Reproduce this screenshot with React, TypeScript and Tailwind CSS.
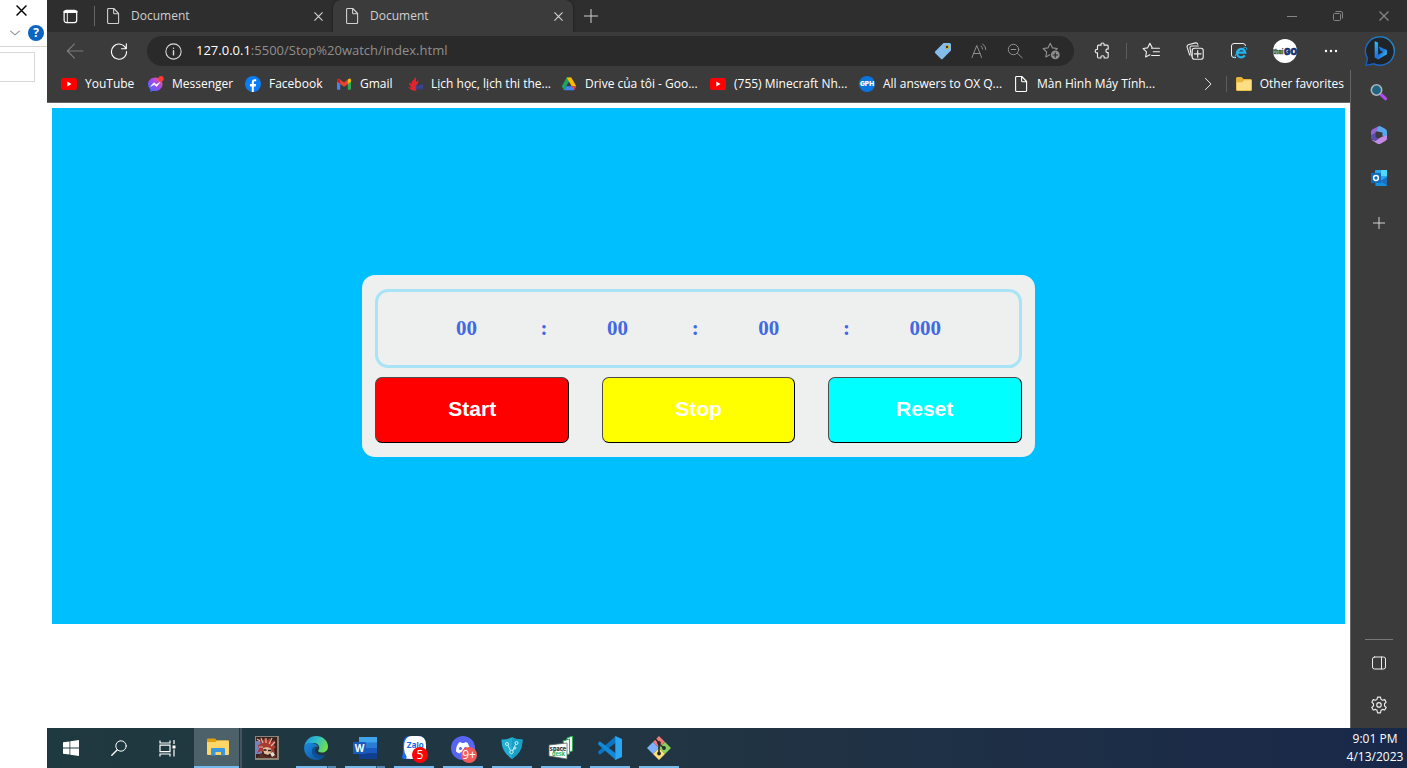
import { useEffect, useState } from "react";
import type { ReactNode } from "react";

const ui = "font-['Open_Sans','Noto_Sans',sans-serif]";

/* ---------- line icons ---------- */

function Line({ size = 16, className = "", width = 1, children }: { size?: number; className?: string; width?: number; children: ReactNode }) {
  return (
    <svg width={size} height={size} viewBox="0 0 16 16" fill="none" stroke="currentColor" strokeWidth={width} strokeLinecap="round" strokeLinejoin="round" className={`shrink-0 ${className}`} aria-hidden="true">
      {children}
    </svg>
  );
}

const PageIcon = () => (
  <Line width={1.1}>
    <path d="M2.6 1.5v13q0 1 1 1h9q1 0 1-1V5.5L8.8.5H3.6q-1 0-1 1zM8.6.7v4q0 1 1 1h4" />
  </Line>
);
const CrossIcon = ({ size = 9 }: { size?: number }) => (
  <svg width={size} height={size} viewBox="0 0 10 10" stroke="currentColor" strokeWidth="1.3" aria-hidden="true">
    <path d="M.5.5l9 9M9.5.5l-9 9" />
  </svg>
);
const PlusIcon = ({ size = 14 }: { size?: number }) => (
  <svg width={size} height={size} viewBox="0 0 14 14" stroke="currentColor" aria-hidden="true">
    <path d="M7 0v14M0 7h14" />
  </svg>
);
const TabsIcon = () => (
  <Line size={15} className="text-white">
    <rect x="1.2" y="1.5" width="13.4" height="13" rx="2.4" strokeWidth="1.3" />
    <path d="M1.500 3h13" strokeWidth="2.400" />
    <path d="M4.600 4v10" />
  </Line>
);
const RefreshIcon = () => (
  <Line size={18} className="text-white">
    <path d="M14.2 6A6.7 6.7 0 1 0 14.7 8.6M14.5 1.6V6h-4.3" />
  </Line>
);
const StarPath = "M7.3 1.2l1.9 4 4.4.6-3.2 3.1.8 4.4-3.9-2.1-3.9 2.1.8-4.4L1 5.8l4.4-.6z";

/* ---------- colour icons ---------- */

const YouTube = () => (
  <svg width="16" height="12" viewBox="0 0 16 12" aria-hidden="true">
    <rect width="16" height="12" rx="2.6" fill="#f00" />
    <path d="M6.3 3.6v4.8L10.5 6z" fill="#fff" />
  </svg>
);
const Messenger = () => (
  <svg width="16" height="16" viewBox="0 0 16 16" aria-hidden="true">
    <defs>
      <linearGradient id="msg" x1="0" y1="1" x2="1" y2="0">
        <stop offset="0" stopColor="#2d7bff" />
        <stop offset=".5" stopColor="#9b45f5" />
        <stop offset="1" stopColor="#ff5f6d" />
      </linearGradient>
    </defs>
    <path d="M7.2 1.4C3.2 1.4 0 4.3 0 8.2c0 2.1 1 3.8 2.4 5V16l2.4-1.3c.8.2 1.6.3 2.4.3 4 0 7.3-2.9 7.3-6.8s-3.3-6.8-7.3-6.8z" fill="url(#msg)" />
    <path d="M2.8 10.3l3.1-3.6 2.4 1.9 3.4-2-3 3.9-2.5-1.9z" fill="#fff" stroke="#fff" strokeWidth=".6" />
    <circle cx="13" cy="2.7" r="2.7" fill="#ff3b30" />
  </svg>
);
const Facebook = () => (
  <svg width="16" height="16" viewBox="0 0 16 16" aria-hidden="true">
    <circle cx="8" cy="8" r="8" fill="#0a7cf4" />
    <path d="M6.8 16v-5.5H4.9V8h1.9V6.4c0-2.1 1.1-3.2 3-3.2.7 0 1.4.1 1.4.1v2H10c-1 0-1.200.6-1.200 1.200V8h2.300l-.4 2.500H8.800V16z" fill="#fff" />
  </svg>
);
const Gmail = () => (
  <svg width="16" height="16" viewBox="0 0 16 16" aria-hidden="true">
    <path d="M1 4v9q0 .8.8.8h2.400V6.500z" fill="#4285f4" />
    <path d="M15 4v9q0 .8-.8.8h-2.400V6.500z" fill="#34a853" />
    <path d="M1 4.300q0-2 2-1.600l5 3.900 5-3.900-1.200 5.500L8 10.800 4.200 8 1 5.600z" fill="#ea4335" />
    <path d="M11.800 3.600Q15 1 15 4.200v1.400L11.800 8z" fill="#fbbc04" />
    <path d="M1 4.200Q1 3 2 2.600l2.200 1.700V8L1 5.600z" fill="#c5221f" />
  </svg>
);
const Flame = () => (
  <svg width="16" height="16" viewBox="0 0 16 16" aria-hidden="true">
    <path d="M8 1c2 2 .3 3.600 1.500 5 .8-.7 1-1.500 1.800-2 .3 2.200-.2 3.600-1.800 5.400-.6 2-1 3.600 0 5.100-3 .7-6-.3-8.500-3.400 1.500.5 2.600.5 3.300-.2C2.800 9.800 2.200 8.600 2 6.800c1.300.4 2 .8 2.500 1.700C4.500 6 5 5 6.400 4 7.300 3.200 8 2.200 8 1z" fill="#e4232c" />
    <path d="M9.500 9v4.500M12 9v4.500M9.500 11.200H12M13.300 13.500V9l1 2 1.200-2v4.500" stroke="#3c4390" strokeWidth="1.200" fill="none" />
  </svg>
);
const Drive = () => (
  <svg width="16" height="16" viewBox="0 0 16 16" aria-hidden="true">
    <path d="M5.700 1.500h4.600L8 5.600 3 14.200.8 10.200z" fill="#1ea362" />
    <path d="M5.700 1.500h4.600l5 8.700h-4.600z" fill="#ffba00" />
    <path d="M5.400 10.200h9.800L13 14.200H3z" fill="#4285f4" />
    <path d="M10.700 10.200h4.600L13 14.200z" fill="#ea4335" />
  </svg>
);
const Gph = () => (
  <svg width="16" height="16" viewBox="0 0 16 16" aria-hidden="true">
    <circle cx="8" cy="8" r="8" fill="#0a75dc" />
    <text x="8" y="10.400" textAnchor="middle" fill="#fff" fontFamily="Inter, sans-serif" fontWeight="900" fontSize="6.500">GPH</text>
  </svg>
);
const Folder = () => (
  <svg width="16" height="14" viewBox="0 0 16 14" aria-hidden="true">
    <path d="M0 1.500Q0 0 1.500 0h4l2 2h7q1.500 0 1.500 1.500v9q0 1.500-1.500 1.500h-13Q0 14 0 12.500z" fill="#e8b53c" />
    <path d="M.8 5.200h5.400l2-2h6.900v9.300q0 .7-.7.700H1.500q-.7 0-.7-.7z" fill="#ffdf84" />
  </svg>
);
const Tag = () => (
  <svg width="18" height="18" viewBox="0 0 18 18" aria-hidden="true">
    <path d="M9.500 1h6Q17 1 17 2.500v6L8.800 16.700q-1 1-2 0L1.300 11.200q-1-1 0-2z" fill="#83bdec" />
    <circle cx="13" cy="5" r="1.700" fill="#4a3b18" stroke="#d5a72b" />
  </svg>
);
const InternetExplorer = () => (
  <svg width="18" height="18" viewBox="0 0 18 18" fill="none" aria-hidden="true">
    <path d="M6 15.500H4Q1.500 15.500 1.500 13V4Q1.500 1.500 4 1.500h9Q15.500 1.500 15.500 4" stroke="#eee" />
    <path d="M14.700 13.300A4.200 4.200 0 1 1 15.300 10.700H7.500" stroke="#22b4ef" strokeWidth="2.200" />
    <path d="M5 16.500c-1.400-2 4-9.800 10.300-11 1.400-.2 1.800.8 1.200 2.200" stroke="#22b4ef" strokeWidth="1" />
  </svg>
);
const Bing = () => (
  <svg width="32" height="32" viewBox="0 0 32 32" fill="none" aria-hidden="true">
    <defs>
      <linearGradient id="bingRing" x1="1" y1="0" x2="0" y2="1">
        <stop offset="0" stopColor="#2196d8" />
        <stop offset="1" stopColor="#1459c4" />
      </linearGradient>
      <linearGradient id="bingB" x1="0" y1="0" x2="1" y2="1">
        <stop offset="0" stopColor="#2ec5f4" />
        <stop offset=".55" stopColor="#1b6fe0" />
        <stop offset="1" stopColor="#48d5ee" />
      </linearGradient>
    </defs>
    <path d="M16 1.800a14.200 14.200 0 1 1-6 27L2 30.500l1.500-7.200A14.200 14.200 0 0 1 16 1.800z" fill="#202428" stroke="url(#bingRing)" strokeWidth="1.300" />
    <path d="M10.700 6.200l3.400 1.300v12.300l5-2.800-2.600-1.300-1.600-4.200 8 3.400v4.300l-8.800 5.300-3.400-2.100z" fill="url(#bingB)" />
  </svg>
);
const SearchColor = () => (
  <svg width="18" height="18" viewBox="0 0 18 18" fill="none" aria-hidden="true">
    <path d="M11.500 12l4 3.700" stroke="#b04af0" strokeWidth="3.200" strokeLinecap="round" />
    <circle cx="6.500" cy="7" r="5.200" fill="#20627f" stroke="#a9b4b9" strokeWidth="1.600" />
  </svg>
);
const Office = () => (
  <svg width="18" height="18" viewBox="0 0 18 18" aria-hidden="true">
    <path d="M8.500.2L3 3Q1 4 1 6v6.500l4 1.500V8q0-1.600 1.500-2.400l5-2.600z" fill="#9665d3" />
    <path d="M8.500.2q1.200-.4 2.400.2L15.500 3Q17 4 17 5.700V12.500l-4.600-3V6.500L6.500 5.300z" fill="#58a7ed" />
    <path d="M17 9.500v3q0 1.500-1.300 2.300L10.500 17.700q-1.500.6-3 0L1.200 13.800 5 14.500l7.400-4z" fill="#c48ae6" />
    <path d="M1 9v4l4.500 2 3-2L5.600 11V7z" fill="#5b4cb0" />
  </svg>
);
const Outlook = () => (
  <svg width="18" height="18" viewBox="0 0 18 18" aria-hidden="true">
    <rect x="5" y="1" width="12" height="13" rx="1" fill="#28a8ea" />
    <path d="M11 1h6v6h-6z" fill="#50d9ff" />
    <path d="M5 9l6 3 6-4v8.500q0 .5-.8.500H5.500z" fill="#1490df" />
    <path d="M17 8v8.500L10 12z" fill="#1a6fc0" />
    <rect x="1" y="4" width="10" height="10" rx="1" fill="#0f6cbd" />
    <circle cx="6" cy="9" r="2.400" fill="none" stroke="#fff" strokeWidth="1.500" />
  </svg>
);

/* ---------- taskbar icons ---------- */

const WindowsLogo = () => (
  <svg width="16" height="16" viewBox="0 0 16 16" fill="#fff" aria-hidden="true">
    <path d="M0 2.300l6.500-.9v6.100H0zM7.300 1.300L16 0v7.500H7.300zM0 8.400h6.500v6.200L0 13.700zM7.300 8.400H16V16l-8.700-1.300z" />
  </svg>
);
const TaskView = () => (
  <svg width="17" height="17" viewBox="0 0 17 17" fill="none" stroke="#fff" strokeWidth="1.200" aria-hidden="true">
    <path d="M1 .5v2.500h10V.5M1 16.500V14h10v2.500M1 5.200h10v6.500H1zM15 0v4M15 9.500V16.500" />
    <path d="M13.500 5.500h3v3h-3z" fill="#fff" stroke="none" />
  </svg>
);
const Explorer = () => (
  <svg width="22" height="18" viewBox="0 0 22 18" aria-hidden="true">
    <path d="M0 1.500Q0 .5 1 .5h7l2 2h11q1 0 1 1V7H0z" fill="#e2a00f" />
    <path d="M0 4h8.500l1.500-1.500H21q1 0 1 1V16q0 1-1 1H1q-1 0-1-1z" fill="#ffd667" />
    <path d="M4 17.500V11q0-1 1-1h12q1 0 1 1v6.500h-4V14H8.500v3.500z" fill="#3b96dd" />
  </svg>
);
const Portrait = () => (
  <svg width="24" height="24" viewBox="0 0 24 24" aria-hidden="true">
    <rect width="24" height="24" fill="#8a8577" />
    <rect x="1" y="1" width="21" height="21" fill="#39231f" />
    <path d="M1 5h6v13H1z" fill="#7a80b8" />
    <path d="M3 9l3-1-2-5 4 2 1-3 3 2 3-2 1 4 4-2-1 5 2 2-2 2 1 5-4-3-4 2-6-2-4 2 2-4z" fill="#a83a30" />
    <path d="M2 3l3 2M6 2l2 5M11 2v5M17 2l-3 6M20 6l-4 4M4 11l4 0" stroke="#e8b5a2" strokeWidth="1.200" />
    <path d="M8 12l4-1 4 1.500.5 3.500-3.500 3-4-1.500z" fill="#e6bb98" />
    <path d="M8.500 14h3M13 14.500h3" stroke="#2a1614" strokeWidth="1.400" />
    <path d="M2 22l4-5 5 3 4 1 5-4 2 5z" fill="#5c2a22" />
    <path d="M15 17l3-1 2 3-3 2z" fill="#e6ddcd" />
  </svg>
);
const EdgeLogo = () => (
  <svg width="24" height="24" viewBox="0 0 24 24" aria-hidden="true">
    <defs>
      <linearGradient id="edgeTop" x1="0" y1=".2" x2="1" y2=".5">
        <stop offset="0" stopColor="#1f93de" />
        <stop offset=".5" stopColor="#31bfc8" />
        <stop offset="1" stopColor="#6fe04b" />
      </linearGradient>
      <linearGradient id="edgeLow" x1="0" y1="0" x2="1" y2="1">
        <stop offset="0" stopColor="#1c8de0" />
        <stop offset="1" stopColor="#0c4a96" />
      </linearGradient>
    </defs>
    <path d="M.2 11C1 4.500 6 0 12 0c7 0 12 5 12 10.500 0 4-3 6-6.200 6-3 0-4.300-1.300-3.300-2.500 1.800-2 .8-6.500-4.500-7C5 6.500 1.500 8 .2 11z" fill="url(#edgeTop)" />
    <path d="M.1 12C.3 8.500 4 6.400 8.500 7c3.600.5 5.500 2.500 5.600 4.500-1.500-1.400-5-.9-5.800 2.500-.9 4 2.700 8.500 8 7.500 2-.4 3.800-1.500 5.200-2.500-2 3-5.500 5-9.500 5C5.500 24 0 18.500.1 12z" fill="url(#edgeLow)" />
    <path d="M8.200 14c-.9 4.500 3.300 8.700 8.300 7.500 2.300-.5 4-1.700 5-2.500-4 1.200-8.500.4-10-2.500-.8-1.600-.6-3.500.8-5-2-.6-3.700.5-4.100 2.500z" fill="#0b4f9e" />
  </svg>
);
const Word = () => (
  <svg width="24" height="22" viewBox="0 0 24 22" aria-hidden="true">
    <path d="M6 0h18v6H6z" fill="#41a5ee" />
    <path d="M6 5.500h18V11H6z" fill="#2b7cd3" />
    <path d="M6 11h18v5.500H6z" fill="#185abd" />
    <path d="M6 16.500h18V22H6z" fill="#103f91" />
    <rect y="5" width="13" height="12" rx="1" fill="#185abd" />
    <text x="6.500" y="14.600" textAnchor="middle" fill="#fff" fontFamily="Open Sans, sans-serif" fontWeight="700" fontSize="10">W</text>
  </svg>
);
const Zalo = () => (
  <svg width="24" height="24" viewBox="0 0 24 24" aria-hidden="true">
    <path d="M8 0h8q8 0 8 9v5q0 9-8 9H2q-2 0-2-2l1-4V9Q1 0 8 0z" fill="#1a6cf0" />
    <path d="M10 0h6q8 0 8 9v5q0 9-8 9H9q-3-.5-5-.5.800-1 .5-2.500Q2 17 2 12 2 0 10 0z" fill="#fff" />
    <text x="4.500" y="12" fill="#1668ea" fontFamily="Inter, sans-serif" fontWeight="700" fontSize="8">Zalo</text>
  </svg>
);
const Discord = () => (
  <svg width="24" height="24" viewBox="0 0 24 24" aria-hidden="true">
    <circle cx="12" cy="12" r="12" fill="#5865f2" />
    <path d="M8 6.500l2-.5.500 1h3l.5-1 2.500.7Q19 10 19 15.500q-1.500 1.500-4 2l-.8-1.500H9.700L9 17.500q-2.500-.5-4-2Q5 10 8 6.500z" fill="#fff" />
    <circle cx="9.500" cy="12.500" r="1.500" fill="#5865f2" />
    <circle cx="14.500" cy="12.500" r="1.500" fill="#5865f2" />
  </svg>
);
const Shield = () => (
  <svg width="22" height="22" viewBox="0 0 22 22" fill="none" aria-hidden="true">
    <path d="M11 .3q5 2.500 10.500 2.200Q22 15 11 22 0 15 .5 2.500 6 2.800 11 .3z" fill="#1fb0d4" />
    <path d="M11 .3q5 2.500 10.500 2.200Q22 15 11 22z" fill="#16a0c6" />
    <path d="M6.500 7.500l4 8 4.500-9M10.500 15.500l3-4" stroke="#bfeaf5" />
    <g fill="#16a0c6" stroke="#d3f1f8">
      <circle cx="6" cy="7" r="1.500" />
      <circle cx="15.500" cy="6" r="1.500" />
      <circle cx="10.500" cy="15" r="1.700" />
      <circle cx="14" cy="11" r="1" />
    </g>
  </svg>
);
const Spacedesk = () => (
  <svg width="26" height="24" viewBox="0 0 26 24" aria-hidden="true">
    <path d="M19 2l5.500-2v15l-4 1z" fill="#eef7ef" stroke="#2fa85a" />
    <path d="M15 5l6.500-2v15l-4 1z" fill="#f4faf5" stroke="#2fa85a" />
    <path d="M1 9l18-2v16L1 20z" fill="#fff" stroke="#5b6266" strokeWidth=".8" />
    <text x="10" y="14.500" textAnchor="middle" fill="#111" fontFamily="Inter, sans-serif" fontWeight="700" fontSize="5.500">space</text>
    <text x="10.500" y="20" textAnchor="middle" fill="#1fb356" fontFamily="Inter, sans-serif" fontWeight="700" fontSize="5.500">desk</text>
  </svg>
);
const Code = () => (
  <svg width="24" height="24" viewBox="0 0 24 24" aria-hidden="true">
    <path d="M.5 15.200L17.500.2 18 6.500 2.500 18.200q-.7.400-1.200 0l-1-1q-.6-1 .2-2z" fill="#0d74c4" />
    <path d="M.5 8.800L17.500 23.800l.5-6.300L2.500 5.800q-.7-.4-1.200 0l-1 1q-.6 1 .2 2z" fill="#1188d8" />
    <path d="M17.300.1L24 3v18l-6.700 2.900q-.7.100 0-1.200V1.300q-.5-1 0-1.200z" fill="#2aa6f2" />
  </svg>
);
const Git = () => (
  <svg width="24" height="24" viewBox="0 0 24 24" fill="none" aria-hidden="true">
    <path d="M12 0l6 6-6 6-6-6z" fill="#f07a78" />
    <path d="M6 6l6 6-6 6-6-6z" fill="#7fb0fa" />
    <path d="M18 6l6 6-6 6-6-6z" fill="#87d15c" />
    <path d="M12 12l6 6-6 6-6-6z" fill="#ffe17c" />
    <path d="M8 2.500l4 4.500v11M12 8l5 4" stroke="#262b2b" strokeWidth="1.600" />
    <circle cx="12" cy="7" r="1.900" fill="#262b2b" />
    <circle cx="17" cy="12" r="1.900" fill="#262b2b" />
    <circle cx="12" cy="17.500" r="1.900" fill="#262b2b" />
  </svg>
);

/* ---------- window parts ---------- */

function IconButton({ label, className = "", children }: { label: string; className?: string; children: ReactNode }) {
  return (
    <button type="button" aria-label={label} className={`flex shrink-0 items-center justify-center ${className}`}>
      {children}
    </button>
  );
}

function Tab({ active = false }: { active?: boolean }) {
  return (
    <div className={`flex h-full items-center pr-2.5 ${active ? "w-60 rounded-t-lg bg-[#3b3b3b] pl-[11px] shadow-[0_0_3px_#1a1a1a]" : "w-[238px] pl-2.5"}`}>
      <button type="button" className="flex flex-1 items-center gap-2.5 text-left text-[#d0d0d0]">
        <PageIcon />
        <span>Document</span>
      </button>
      <IconButton label="Close tab" className="h-4 w-2.5 text-[#d0d0d0]">
        <CrossIcon />
      </IconButton>
    </div>
  );
}

function TitleBar() {
  return (
    <header className="flex h-8 shrink-0 items-center overflow-hidden bg-[#2e2e2e]">
      <IconButton label="Tab actions" className="h-full w-[47px]">
        <TabsIcon />
      </IconButton>
      <span className="h-5 w-px bg-[#666]" />
      <Tab />
      <Tab active />
      <IconButton label="New tab" className="h-full w-9 text-[#d0d0d0]">
        <PlusIcon />
      </IconButton>
      <div className="ml-auto flex h-full text-[#858585]">
        <IconButton label="Minimize" className="w-[46px]">
          <span className="h-px w-2.5 bg-[#858585]" />
        </IconButton>
        <IconButton label="Restore" className="w-[46px]">
          <svg width="10" height="10" viewBox="0 0 10 10" fill="none" stroke="currentColor" aria-hidden="true">
            <rect x=".5" y="2.500" width="7" height="7" rx="1" />
            <path d="M2.500.5H8Q9.500.5 9.500 2v5.500" />
          </svg>
        </IconButton>
        <IconButton label="Close window" className="w-[46px]">
          <CrossIcon size={10} />
        </IconButton>
      </div>
    </header>
  );
}

function Toolbar() {
  return (
    <div className="flex h-[38px] shrink-0 items-center pl-1.5">
      <IconButton label="Back" className="w-11 text-[#7d7d7d]">
        <Line size={18}>
          <path d="M15 8H1.200M7.500 1.700L1.200 8l6.300 6.300" />
        </Line>
      </IconButton>
      <IconButton label="Refresh" className="w-11">
        <RefreshIcon />
      </IconButton>
      <div className="ml-1.5 flex h-[30px] flex-1 items-center rounded-full bg-[#2a2a2a] pl-[18px] pr-[5px] text-[#8f8f8f]">
        <Line size={17} className="text-[#ddd]">
          <circle cx="8" cy="8" r="7.200" />
          <path d="M8 7.200v4M8 4.800v.2" strokeWidth="1.300" />
        </Line>
        <a href="#address" className="ml-3.5 flex-1 whitespace-nowrap text-[13px]">
          <span className="text-white">127.0.0.1</span>:5500/Stop%20watch/index.html
        </a>
        <IconButton label="Shopping" className="w-9">
          <Tag />
        </IconButton>
        <IconButton label="Read aloud" className="w-9">
          <Line>
            <path d="M1 14.500L5.800 2.500l4.800 12M2.700 10.500h6.200M10 3q1.600 1.200 1.600 3M11.800 1q3 2.300 3 5.500" />
          </Line>
        </IconButton>
        <IconButton label="Zoom out" className="w-9">
          <Line>
            <circle cx="6.500" cy="6.500" r="5.200" />
            <path d="M10.500 10.500l4.700 4.200M4.200 6.500h4.600" />
          </Line>
        </IconButton>
        <IconButton label="Add to favorites" className="w-9">
          <Line size={18}>
            <path d={StarPath} />
            <circle cx="11.800" cy="11.500" r="4.600" fill="#2a2a2a" stroke="none" />
            <circle cx="11.800" cy="11.500" r="3.900" fill="currentColor" stroke="none" />
            <path d="M11.800 9.500v4M9.800 11.500h4" stroke="#2a2a2a" />
          </Line>
        </IconButton>
      </div>
      <div className="ml-1.5 flex items-center text-[#eee]">
        <IconButton label="Extensions" className="w-11">
          <Line size={18}>
            <path d="M5 2.800h2.200q-.4-1.900 1.300-1.900t1.300 1.900h2.700q1 0 1 1v2.500q-2-.5-2 1.500t2 1.500v3.900q0 1-1 1H9.900q.4-2-1.400-2t-1.400 2H5q-1 0-1-1V9.600Q2 10 2 8.200t2-1.500V3.800q0-1 1-1z" />
          </Line>
        </IconButton>
        <span className="mx-0.5 h-4 w-px bg-[#5c5c5c]" />
        <IconButton label="Favorites" className="w-11">
          <Line size={18}>
            <path d="M9 5L7 1.200 5 5.200l-4 .6 3 3-.8 4.500L7 11.300M8.500 5.500h7M10 8.700h5.500M8.500 12h7" />
          </Line>
        </IconButton>
        <IconButton label="Collections" className="w-11">
          <Line size={18}>
            <path d="M3.200 11.500L1 4.500Q.8 3 2 2.500L8.500.8Q10 .5 10.500 2M4.800 12.500L3.500 5Q3.500 3.500 5 3.500h6" />
            <rect x="5.500" y="5.500" width="9.800" height="9.800" rx="2" />
            <path d="M10.400 7.500v6M7.400 10.500h6" />
          </Line>
        </IconButton>
        <IconButton label="Internet Explorer mode" className="w-11">
          <InternetExplorer />
        </IconButton>
        <IconButton label="Profile" className="w-12">
          <span className="flex size-6 items-center justify-center rounded-full bg-white">
            <svg width="24" height="12" viewBox="0 0 24 12" aria-hidden="true">
              <text x="0" y="9" fill="#5f9a17" stroke="#222" strokeWidth=".3" fontFamily="Inter, sans-serif" fontWeight="800" fontSize="5.500">thai</text>
              <text x="11" y="9.500" fill="#123d8f" stroke="#101c50" strokeWidth=".5" fontFamily="Inter, sans-serif" fontWeight="900" fontSize="8.500">GO</text>
            </svg>
          </span>
        </IconButton>
        <IconButton label="Settings and more" className="w-11">
          <svg width="14" height="4" viewBox="0 0 14 4" fill="#fff" aria-hidden="true">
            <circle cx="2" cy="2" r="1.200" />
            <circle cx="7" cy="2" r="1.200" />
            <circle cx="12" cy="2" r="1.200" />
          </svg>
        </IconButton>
        <IconButton label="Discover" className="w-[54px]">
          <Bing />
        </IconButton>
      </div>
    </div>
  );
}

const bookmarks = [
  { text: "YouTube", icon: <YouTube />, width: "w-[87px]" },
  { text: "Messenger", icon: <Messenger />, width: "w-[97px]" },
  { text: "Facebook", icon: <Facebook />, width: "w-[91px]" },
  { text: "Gmail", icon: <Gmail />, width: "w-[71px]" },
  { text: "Lịch học, lịch thi the...", icon: <Flame />, width: "w-[154px]" },
  { text: "Drive của tôi - Goo...", icon: <Drive />, width: "w-[149px]" },
  { text: "(755) Minecraft Nh...", icon: <YouTube />, width: "w-[149px]" },
  { text: "All answers to OX Q...", icon: <Gph />, width: "w-[154px]" },
  { text: "Màn Hình Máy Tính...", icon: <PageIcon />, width: "w-[154px]" },
];

function Bookmarks() {
  return (
    <nav aria-label="Favorites bar" className="flex h-8 shrink-0 items-center overflow-hidden whitespace-nowrap pb-1 pl-3.5 pr-1.5 text-white">
      {bookmarks.map((b) => (
        <a key={b.text} href="#bookmark" className={`flex shrink-0 items-center gap-2 ${b.width}`}>
          <span className="flex w-4 justify-center">{b.icon}</span>
          {b.text}
        </a>
      ))}
      <div className="ml-auto flex items-center">
        <IconButton label="More favorites" className="w-9">
          <Line size={14}>
            <path d="M5 1.500L11.500 8 5 14.500" />
          </Line>
        </IconButton>
        <span className="mr-[9px] h-4 w-px bg-[#5c5c5c]" />
        <a href="#other" className="flex items-center gap-2">
          <Folder />
          Other favorites
        </a>
      </div>
    </nav>
  );
}

const actionStyle =
  "h-[66px] w-[30%] rounded-[7px] border border-b-black border-l-[#4c4c4c] border-r-black border-t-[#4c4c4c] pb-0.5 font-['Liberation_Sans',Arial,sans-serif] text-[21px] font-bold text-white";

function Stopwatch() {
  const [elapsed, setElapsed] = useState(0);
  const [running, setRunning] = useState(false);

  useEffect(() => {
    if (!running) return;
    let last = Date.now();
    const id = setInterval(() => {
      const now = Date.now();
      const step = now - last;
      last = now;
      setElapsed((e) => e + step);
    }, 10);
    return () => clearInterval(id);
  }, [running]);

  const pad = (n: number, size = 2) => String(Math.floor(n)).padStart(size, "0");

  return (
    <section aria-label="Stopwatch" className="flex w-[52%] flex-col gap-[9px] rounded-[13px] bg-[#eef0f0] px-[13px] py-3.5">
      <div role="timer" className="flex h-[79px] items-center justify-evenly rounded-[13px] border-3 border-[#a8e3f6] px-[18px] font-['Liberation_Serif','Times_New_Roman',serif] text-[21px] font-bold text-[#4169e1]">
        <span>{pad(elapsed / 3600000)}</span>
        <span className="pl-1">:</span>
        <span>{pad((elapsed / 60000) % 60)}</span>
        <span className="pl-1">:</span>
        <span>{pad((elapsed / 1000) % 60)}</span>
        <span className="pl-1">:</span>
        <span>{pad(elapsed % 1000, 3)}</span>
      </div>
      <div className="flex justify-between">
        <button type="button" onClick={() => setRunning(true)} className={`bg-[#ff0000] ${actionStyle}`}>Start</button>
        <button type="button" onClick={() => setRunning(false)} className={`bg-[#ffff00] ${actionStyle}`}>Stop</button>
        <button
          type="button"
          onClick={() => {
            setRunning(false);
            setElapsed(0);
          }}
          className={`bg-[#00ffff] ${actionStyle}`}
        >
          Reset
        </button>
      </div>
    </section>
  );
}

function SideBar() {
  const cell = "h-[43px] w-full";
  const lowCell = "h-[42px] w-full";
  return (
    <aside className="flex w-[57px] shrink-0 flex-col items-center border-l border-[#666] pb-0.5 text-[#eee]">
      <IconButton label="Search" className={cell}><SearchColor /></IconButton>
      <IconButton label="Office" className={cell}><Office /></IconButton>
      <IconButton label="Outlook" className={cell}><Outlook /></IconButton>
      <IconButton label="Customize" className="mt-0.5 h-[43px] w-full"><PlusIcon size={12} /></IconButton>
      <span className="mb-0.5 mt-auto h-px w-7 bg-[#777]" />
      <IconButton label="Hide sidebar" className={lowCell}>
        <Line>
          <rect x="1.500" y="2" width="13" height="12" rx="2" />
          <path d="M10.500 2v12" />
        </Line>
      </IconButton>
      <IconButton label="Settings" className={lowCell}>
        <Line size={18}>
          <path d="M6.700 1h2.600l.5 2 1.300.8 2-.6 1.300 2.300-1.500 1.400v1.900l1.500 1.400-1.300 2.300-2-.6-1.300.8-.5 2.300H6.700l-.5-2.300-1.300-.8-2 .6-1.300-2.300 1.500-1.400V6.900L1.600 5.500l1.300-2.300 2 .6L6.200 3z" />
          <circle cx="8" cy="7.900" r="2" />
        </Line>
      </IconButton>
    </aside>
  );
}

const apps = [
  { name: "Portrait", icon: <Portrait />, bar: "none" },
  { name: "Edge", icon: <EdgeLogo />, bar: "split" },
  { name: "Word", icon: <Word />, bar: "split" },
  { name: "Zalo", icon: <Zalo />, bar: "full", badge: "5", badgeStyle: "bg-[#fa0505]" },
  { name: "Discord", icon: <Discord />, bar: "full", badge: "9+", badgeStyle: "bg-[#f05a5c]" },
  { name: "Shield", icon: <Shield />, bar: "full" },
  { name: "Spacedesk", icon: <Spacedesk />, bar: "full" },
  { name: "Visual Studio Code", icon: <Code />, bar: "full" },
  { name: "Git Bash", icon: <Git />, bar: "full" },
];

function TaskBar() {
  return (
    <footer className="flex h-10 shrink-0 items-stretch bg-linear-to-r from-[#1f3940] via-[#213443] to-[#192849]">
      <IconButton label="Start menu" className="w-12"><WindowsLogo /></IconButton>
      <IconButton label="Search Windows" className="w-12">
        <Line className="text-white">
          <circle cx="10" cy="6" r="5.200" />
          <path d="M6.300 9.700L.8 15.200" strokeWidth="1.300" />
        </Line>
      </IconButton>
      <IconButton label="Task view" className="w-12"><TaskView /></IconButton>
      <div className="ml-[3px] flex gap-px">
        <button type="button" aria-label="File Explorer" className="flex w-12">
          <span className="flex h-full w-[45px] items-center justify-center border-b-2 border-[#76b9ed] bg-[#4c616a] pl-0.5"><Explorer /></span>
          <span className="h-full w-[3px] border-l border-[#24383f] bg-[#43565f]" />
        </button>
        {apps.map((app) => (
          <button key={app.name} type="button" aria-label={app.name} className="flex w-12 flex-col items-center">
            <span className="relative flex flex-1 items-center justify-center pt-0.5">
              {app.icon}
              {app.badge && (
                <span className={`absolute -right-0.5 bottom-[3px] flex h-4 min-w-4 items-center justify-center rounded-full text-[12px] leading-4 text-white ${app.badgeStyle}`}>{app.badge}</span>
              )}
            </span>
            <span className="flex h-0.5 w-10">
              {app.bar !== "none" && <span className="flex-1 bg-[#76b9ed]" />}
              {app.bar === "split" && <span className="w-[9px] border-l border-[#33566f] bg-[#5588b0]" />}
            </span>
          </button>
        ))}
      </div>
      <button type="button" className="ml-auto flex w-16 flex-col items-center justify-center whitespace-nowrap leading-[18px] text-white">
        <span>9:01 PM</span>
        <span>4/13/2023</span>
      </button>
    </footer>
  );
}

function BackgroundWindow() {
  return (
    <aside className="flex w-[47px] shrink-0 flex-col bg-white">
      <div className="flex h-5 items-center justify-center pr-1">
        <IconButton label="Close background window" className="size-4 text-black"><CrossIcon size={11} /></IconButton>
      </div>
      <div className="flex h-[27px] items-center justify-end gap-2 border-b border-[#d5d5d5] pr-[3px]">
        <IconButton label="Expand" className="text-[#999]">
          <Line size={10} width={2}><path d="M1 5l7 6 7-6" /></Line>
        </IconButton>
        <button type="button" aria-label="Help" className="flex size-4 items-center justify-center rounded-full bg-[#0b66c3] text-[12px] font-bold leading-4 text-white">?</button>
      </div>
      <div className="mr-3 mt-[5px] h-[30px] border-y border-r border-[#d9d9d9]" />
    </aside>
  );
}

export default function App() {
  return (
    <div className={`flex min-h-screen bg-white text-[12px] ${ui}`}>
      <BackgroundWindow />
      <div className="flex min-w-0 flex-1 flex-col">
        <div className="flex flex-1 flex-col bg-[#3b3b3b]">
          <TitleBar />
          <Toolbar />
          <div className="flex flex-1">
            <div className="flex min-w-0 flex-1 flex-col">
              <Bookmarks />
              <main className="flex-1 border-t border-[#666] bg-white p-[5px]">
                <div className="flex min-h-[516px] items-center justify-center bg-[#00bfff]">
                  <Stopwatch />
                </div>
              </main>
            </div>
            <SideBar />
          </div>
        </div>
        <TaskBar />
      </div>
    </div>
  );
}
